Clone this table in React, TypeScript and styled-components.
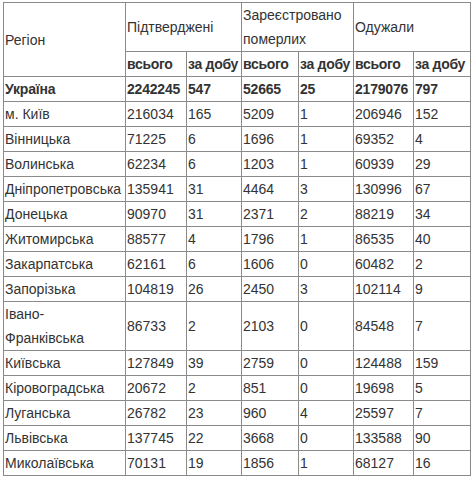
import React from "react";
import styled, { createGlobalStyle } from "styled-components";

const GlobalStyle = createGlobalStyle`
  body {
    margin: 0;
    background: #ffffff;
    font-family: "Liberation Sans", Arial, sans-serif;
  }
`;

const Wrapper = styled.div`
  padding: 2px 3px 0 3px;
`;

const Table = styled.table`
  border-collapse: collapse;
  table-layout: fixed;
  width: 468px;
  font-size: 14px;
  line-height: 24px;
  color: #333333;
`;

const HeadCell = styled.th<{ $sub?: boolean }>`
  border: 1px solid #8a8a8a;
  padding: 0 0 0 1px;
  text-align: left;
  vertical-align: middle;
  white-space: ${({ $sub }) => ($sub ? "nowrap" : "normal")};
  font-weight: ${({ $sub }) => ($sub ? "bold" : "normal")};
  letter-spacing: ${({ $sub }) => ($sub ? "-0.3px" : "normal")};
`;

const Cell = styled.td<{ $bold?: boolean }>`
  border: 1px solid #8a8a8a;
  padding: 0 0 0 1px;
  text-align: left;
  vertical-align: middle;
  white-space: nowrap;
  font-weight: ${({ $bold }) => ($bold ? "bold" : "normal")};
  letter-spacing: ${({ $bold }) => ($bold ? "-0.2px" : "normal")};
`;

const RegionName = styled.span`
  white-space: pre-line;
`;

type Row = [string, number, number, number, number, number, number];

const rows: Row[] = [
  ["Україна", 2242245, 547, 52665, 25, 2179076, 797],
  ["м. Київ", 216034, 165, 5209, 1, 206946, 152],
  ["Вінницька", 71225, 6, 1696, 1, 69352, 4],
  ["Волинська", 62234, 6, 1203, 1, 60939, 29],
  ["Дніпропетровська", 135941, 31, 4464, 3, 130996, 67],
  ["Донецька", 90970, 31, 2371, 2, 88219, 34],
  ["Житомирська", 88577, 4, 1796, 1, 86535, 40],
  ["Закарпатська", 62161, 6, 1606, 0, 60482, 2],
  ["Запорізька", 104819, 26, 2450, 3, 102114, 9],
  ["Івано-\nФранківська", 86733, 2, 2103, 0, 84548, 7],
  ["Київська", 127849, 39, 2759, 0, 124488, 159],
  ["Кіровоградська", 20672, 2, 851, 0, 19698, 5],
  ["Луганська", 26782, 23, 960, 4, 25597, 7],
  ["Львівська", 137745, 22, 3668, 0, 133588, 90],
  ["Миколаївська", 70131, 19, 1856, 1, 68127, 16],
];

const widths = [122, 61, 55, 57, 55, 60, 57];

const App: React.FC = () => {
  return (
    <>
      <GlobalStyle />
      <Wrapper>
        <Table>
          <colgroup>
            {widths.map((w, i) => (
              <col key={i} style={{ width: w }} />
            ))}
          </colgroup>
          <thead>
            <tr>
              <HeadCell rowSpan={2}>Регіон</HeadCell>
              <HeadCell colSpan={2}>Підтверджені</HeadCell>
              <HeadCell colSpan={2}>Зареєстровано померлих</HeadCell>
              <HeadCell colSpan={2}>Одужали</HeadCell>
            </tr>
            <tr>
              <HeadCell $sub>всього</HeadCell>
              <HeadCell $sub>за добу</HeadCell>
              <HeadCell $sub>всього</HeadCell>
              <HeadCell $sub>за добу</HeadCell>
              <HeadCell $sub>всього</HeadCell>
              <HeadCell $sub>за добу</HeadCell>
            </tr>
          </thead>
          <tbody>
            {rows.map((row, i) => (
              <tr key={row[0]}>
                {row.map((value, j) => (
                  <Cell key={j} $bold={i === 0}>
                    {j === 0 ? <RegionName>{value}</RegionName> : value}
                  </Cell>
                ))}
              </tr>
            ))}
          </tbody>
        </Table>
      </Wrapper>
    </>
  );
};

export default App;
